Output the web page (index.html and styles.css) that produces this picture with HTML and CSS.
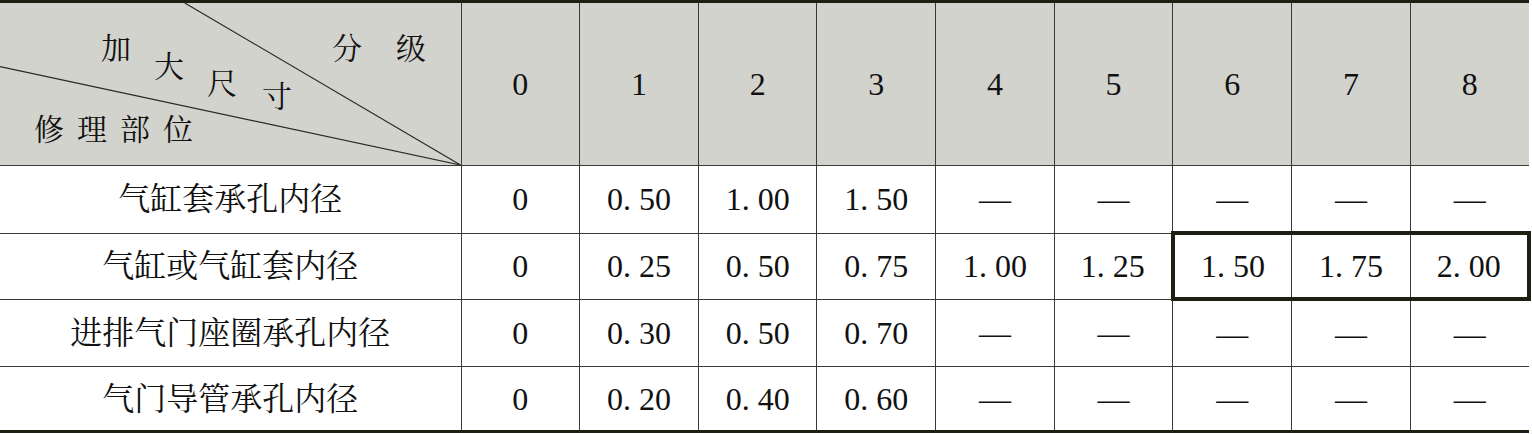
FILE: index.html
```html
<!DOCTYPE html>
<html lang="zh-CN">
  <head>
    <meta charset="UTF-8" />
    <meta name="viewport" content="width=device-width, initial-scale=1.0" />
    <title>加大尺寸分级</title>
    <link rel="stylesheet" href="styles.css">
  </head>
  <body>
    <table class="size-table">
      <colgroup>
        <col class="col-part" />
        <col span="9" class="col-grade" />
      </colgroup>
      <thead>
        <tr>
          <th class="corner">
            <svg class="corner-lines" viewBox="0 0 461 163" preserveAspectRatio="none">
              <line x1="185" y1="0" x2="461" y2="163" />
              <line x1="0" y1="64" x2="461" y2="163" />
            </svg>
            <span class="lbl" style="left: 101px; top: 31px">加</span>
            <span class="lbl" style="left: 154px; top: 49px">大</span>
            <span class="lbl" style="left: 207px; top: 66px">尺</span>
            <span class="lbl" style="left: 262px; top: 79px">寸</span>
            <span class="lbl" style="left: 332px; top: 31px">分</span>
            <span class="lbl" style="left: 396px; top: 31px">级</span>
            <span class="lbl lbl-wide" style="left: 34px; top: 112px">修理部位</span>
          </th>
          <th>0</th>
          <th>1</th>
          <th>2</th>
          <th>3</th>
          <th>4</th>
          <th>5</th>
          <th>6</th>
          <th>7</th>
          <th>8</th>
        </tr>
      </thead>
      <tbody>
        <tr>
          <td>气缸套承孔内径</td>
          <td>0</td>
          <td>0. 50</td>
          <td>1. 00</td>
          <td>1. 50</td>
          <td>—</td>
          <td>—</td>
          <td>—</td>
          <td>—</td>
          <td>—</td>
        </tr>
        <tr class="row-marked">
          <td>气缸或气缸套内径</td>
          <td>0</td>
          <td>0. 25</td>
          <td>0. 50</td>
          <td>0. 75</td>
          <td>1. 00</td>
          <td>1. 25</td>
          <td class="hl hl-first">1. 50</td>
          <td class="hl">1. 75</td>
          <td class="hl hl-last">2. 00</td>
        </tr>
        <tr>
          <td>进排气门座圈承孔内径</td>
          <td>0</td>
          <td>0. 30</td>
          <td>0. 50</td>
          <td>0. 70</td>
          <td>—</td>
          <td>—</td>
          <td>—</td>
          <td>—</td>
          <td>—</td>
        </tr>
        <tr class="row-last">
          <td>气门导管承孔内径</td>
          <td>0</td>
          <td>0. 20</td>
          <td>0. 40</td>
          <td>0. 60</td>
          <td>—</td>
          <td>—</td>
          <td>—</td>
          <td>—</td>
          <td>—</td>
        </tr>
      </tbody>
    </table>
  </body>
</html>
```

FILE: styles.css
```css
body {
  margin: 0;
  background: white;
  font-family: "Liberation Serif", "Noto Serif CJK SC", "Noto Sans CJK SC",
    serif;
  color: #111;
}
.size-table {
  width: 1529px;
  border-collapse: collapse;
  table-layout: fixed;
  font-size: 32px;
}
.col-part {
  width: 461px;
}
.col-grade {
  width: 118.67px;
}
th,
td {
  padding: 0;
  text-align: center;
  vertical-align: middle;
  font-weight: normal;
  border: 1px solid #3a3a34;
  line-height: 1;
}
th:first-child,
td:first-child {
  border-left: none;
}
th:last-child,
td:last-child {
  border-right: none;
}
thead th {
  background: #d3d3cd;
  height: 162px;
  border-top: 3px solid #1e1e12;
}
tbody td {
  height: 65px;
}
.row-marked td {
  height: 62px;
}
.row-last td {
  height: 63px;
  border-bottom: 3px solid #1e1e12;
}
.corner {
  position: relative;
}
.corner-lines {
  position: absolute;
  left: 0;
  top: 0;
  width: 100%;
  height: 100%;
}
.corner-lines line {
  stroke: #2a2a24;
  stroke-width: 1.2;
}
.lbl {
  position: absolute;
  font-size: 30px;
  line-height: 30px;
  white-space: nowrap;
}
.lbl-wide {
  letter-spacing: 13px;
}
td.hl {
  border-top: 4px solid #1e1e12;
  border-bottom: 4px solid #1e1e12;
}
td.hl-first {
  border-left: 4px solid #1e1e12;
}
td.hl-last {
  border-right: 4px solid #1e1e12;
}
```
